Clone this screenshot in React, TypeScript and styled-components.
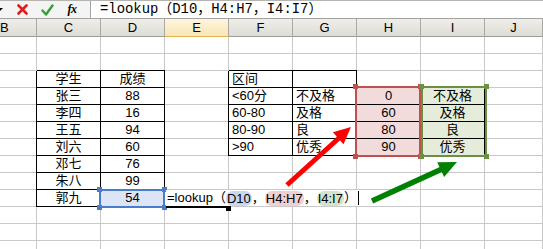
import React from "react";
import styled, { createGlobalStyle } from "styled-components";

const GRID = "#c9c9c9";
const RED = "#c0504d";
const GREEN = "#6a9043";
const BLUE = "#4a7ccb";

const GlobalStyle = createGlobalStyle`
  html, body {
    margin: 0;
    padding: 0;
    background: #fff;
  }
  body {
    font-family: "Liberation Sans", "Noto Sans CJK SC", sans-serif;
    color: #000;
  }
`;

const Window = styled.div`
  position: relative;
  width: 543px;
  height: 249px;
  overflow: hidden;
  background: #fff;
`;

const FormulaBar = styled.div`
  display: flex;
  height: 17px;
  border-top: 1px solid #b4b4b0;
  border-bottom: 1px solid #a2a2a0;
  background: #f4f4f4;
`;

const ToolArea = styled.div`
  display: flex;
  align-items: center;
  width: 90px;
  flex: none;
`;

const DropArrow = styled.span`
  width: 0;
  height: 0;
  margin-left: -3px;
  margin-right: 9px;
  border-left: 3px solid transparent;
  border-right: 3px solid transparent;
  border-top: 3px solid #000;
`;

const ToolSlot = styled.span`
  display: flex;
  align-items: center;
  justify-content: center;
  width: 20px;
  height: 17px;
  margin-right: 5px;
`;

const Fx = styled.span`
  font-family: "Liberation Serif", serif;
  font-style: italic;
  font-weight: bold;
  font-size: 12px;
  letter-spacing: -0.5px;
`;

const FormulaInput = styled.div`
  flex: 1;
  background: #fff;
  border-left: 1px solid #a5a5a5;
  padding-left: 9px;
  font-family: "Liberation Mono", "Noto Sans CJK SC", monospace;
  font-size: 13.9px;
  line-height: 17px;
  white-space: nowrap;
`;

const Sheet = styled.div`
  position: relative;
  display: grid;
  grid-template-columns: 37px repeat(7, 64px) 1fr;
  grid-template-rows: 18px repeat(13, 17px);
`;

const ColHead = styled.div<{ $active?: boolean; $clip?: boolean }>`
  box-sizing: border-box;
  display: flex;
  align-items: center;
  justify-content: ${(p) => (p.$clip ? "flex-start" : "center")};
  border-right: 1px solid #a9a9a3;
  border-bottom: 1px solid ${(p) => (p.$active ? "#e5b250" : "#9d9d97")};
  background: ${(p) =>
    p.$active
      ? "linear-gradient(#fdf5de, #f8e6b4)"
      : "linear-gradient(#efeee9, #dddcd5)"};
  font-size: 13px;
`;

const Cell = styled.div<{
  $box?: boolean;
  $top?: boolean;
  $left?: boolean;
  $fill?: string;
  $align?: "left" | "center";
}>`
  box-sizing: border-box;
  display: flex;
  align-items: center;
  justify-content: ${(p) => (p.$align === "left" ? "flex-start" : "center")};
  padding: 0 3px;
  min-width: 0;
  border-right: 1px solid ${(p) => (p.$box ? "#000" : GRID)};
  border-bottom: 1px solid ${(p) => (p.$box ? "#000" : GRID)};
  background: ${(p) => p.$fill || "#fff"};
  box-shadow: ${(p) =>
    [p.$left ? "-1px 0 0 #000" : "", p.$top ? "0 -1px 0 #000" : ""]
      .filter(Boolean)
      .join(", ") || "none"};
  font-size: 13px;
  line-height: 16px;
  white-space: nowrap;
  overflow: hidden;
`;

const RefRange = styled.div<{ $color: string; $area: string; $inset: string }>`
  position: absolute;
  grid-area: ${(p) => p.$area};
  inset: ${(p) => p.$inset};
  border: 2px solid ${(p) => p.$color};
  pointer-events: none;
`;

const Handle = styled.span<{ $color: string; $v: "top" | "bottom"; $h: "left" | "right" }>`
  position: absolute;
  width: 5px;
  height: 5px;
  background: ${(p) => p.$color};
  ${(p) => p.$v}: -4px;
  ${(p) => p.$h}: -4px;
`;

const ActiveEdge = styled.div`
  position: absolute;
  grid-area: 11 / 4 / 12 / 5;
  left: 1px;
  right: 0;
  bottom: -1px;
  height: 2px;
  background: #000;
`;

const FillHandle = styled.span`
  position: absolute;
  right: -2px;
  top: 0;
  width: 5px;
  height: 5px;
  background: #000;
`;

const Editor = styled.div`
  position: absolute;
  grid-area: 11 / 4 / 12 / 5;
  top: 0;
  left: 1px;
  width: max-content;
  height: 16px;
  display: flex;
  align-items: center;
  padding: 0 3px 0 1px;
  background: #fff;
  font-size: 13px;
  line-height: 16px;
  white-space: nowrap;
`;

const RefText = styled.span<{ $bg: string }>`
  display: inline-block;
  padding: 0 1px;
  border-radius: 7px;
  background: ${(p) => p.$bg};
  line-height: 15px;
`;

const Caret = styled.span`
  display: inline-block;
  width: 1px;
  height: 14px;
  margin-left: 1px;
  background: #000;
`;

const Arrows = styled.svg`
  position: absolute;
  left: 0;
  top: 0;
  pointer-events: none;
`;

type Spec = {
  t?: string;
  box?: boolean;
  top?: boolean;
  left?: boolean;
  fill?: string;
  align?: "left" | "center";
};

const PINK = "#f2dcdb";
const LGREEN = "#e5edda";
const LBLUE = "#dbe5f5";

const cols = ["B", "C", "D", "E", "F", "G", "H", "I", "J"];

const students: [string, string][] = [
  ["张三", "88"],
  ["李四", "16"],
  ["王五", "94"],
  ["刘六", "60"],
  ["邓七", "76"],
  ["朱八", "99"],
  ["郭九", "54"],
];

const grades: [string, string, string][] = [
  ["<60分", "不及格", "0"],
  ["60-80", "及格", "60"],
  ["80-90", "良", "80"],
  [">90", "优秀", "90"],
];

const buildRows = (): Spec[][] => {
  const rows: Spec[][] = [];
  for (let r = 1; r <= 13; r++) {
    const row: Spec[] = cols.map(() => ({}));
    if (r === 3) {
      row[1] = { t: "学生", box: true, top: true, left: true };
      row[2] = { t: "成绩", box: true, top: true };
      row[4] = { t: "区间", box: true, top: true, left: true, align: "left" };
      row[5] = { box: true, top: true };
    }
    if (r >= 4 && r <= 10) {
      const [name, score] = students[r - 4];
      row[1] = { t: name, box: true, left: true };
      row[2] = { t: score, box: true, fill: r === 10 ? LBLUE : undefined };
    }
    if (r >= 4 && r <= 7) {
      const [range, label, low] = grades[r - 4];
      row[4] = { t: range, box: true, left: true, align: "left" };
      row[5] = { t: label, box: true, align: "left" };
      row[6] = { t: low, box: true, fill: PINK };
      row[7] = { t: label, box: true, fill: LGREEN };
    }
    rows.push(row);
  }
  return rows;
};

const corners: ["top" | "bottom", "left" | "right"][] = [
  ["top", "left"],
  ["top", "right"],
  ["bottom", "left"],
  ["bottom", "right"],
];

const Range = ({ color, area, inset }: { color: string; area: string; inset: string }) => (
  <RefRange $color={color} $area={area} $inset={inset}>
    {corners.map(([v, h]) => (
      <Handle key={v + h} $color={color} $v={v} $h={h} />
    ))}
  </RefRange>
);

const App = () => {
  const rows = buildRows();
  return (
    <Window>
      <GlobalStyle />
      <FormulaBar>
        <ToolArea>
          <DropArrow />
          <ToolSlot>
            <svg width="11" height="11" viewBox="0 0 11 11">
              <path d="M1.5 1.5 L9.5 9.5 M9.5 1.5 L1.5 9.5" stroke="#dd1f1f" strokeWidth="2.6" strokeLinecap="round" />
            </svg>
          </ToolSlot>
          <ToolSlot>
            <svg width="13" height="12" viewBox="0 0 13 12">
              <path d="M1.5 6.5 L5 10.5 L11.5 1.5" stroke="#35a035" strokeWidth="2.4" fill="none" strokeLinecap="round" strokeLinejoin="round" />
            </svg>
          </ToolSlot>
          <ToolSlot>
            <Fx>fx</Fx>
          </ToolSlot>
        </ToolArea>
        <FormulaInput>=lookup（D10，H4:H7，I4:I7）</FormulaInput>
      </FormulaBar>

      <Sheet>
        {cols.map((c) => (
          <ColHead key={c} $active={c === "E"} $clip={c === "B"}>
            {c}
          </ColHead>
        ))}
        {rows.map((row, ri) =>
          row.map((s, ci) => (
            <Cell
              key={`${ri}-${ci}`}
              $box={s.box}
              $top={s.top}
              $left={s.left}
              $fill={s.fill}
              $align={s.align}
            >
              {s.t}
            </Cell>
          ))
        )}

        <Range color={BLUE} area="11 / 3 / 12 / 4" inset="-1px 0 -1px -2px" />
        <Range color={RED} area="5 / 7 / 9 / 8" inset="-2px 0 -1px -2px" />
        <Range color={GREEN} area="5 / 8 / 9 / 9" inset="-2px -2px -1px 0" />

        <ActiveEdge>
          <FillHandle />
        </ActiveEdge>
        <Editor>
          =lookup（<RefText $bg="#c9d8f0">D10</RefText>，
          <RefText $bg="#f2cfcf">H4:H7</RefText>，
          <RefText $bg="#d6e3cb">I4:I7</RefText>）
          <Caret />
        </Editor>
      </Sheet>

      <Arrows width="543" height="249" viewBox="0 0 543 249">
        <line x1="287" y1="185" x2="339" y2="138" stroke="#ff0000" strokeWidth="5" />
        <polygon points="351,127 343.5,144.2 332.9,132.2" fill="#ff0000" />
        <line x1="372" y1="201" x2="442" y2="169" stroke="#008000" strokeWidth="5.5" />
        <polygon points="457,162 444.1,176.9 437.3,162.3" fill="#008000" />
      </Arrows>
    </Window>
  );
};

export default App;
